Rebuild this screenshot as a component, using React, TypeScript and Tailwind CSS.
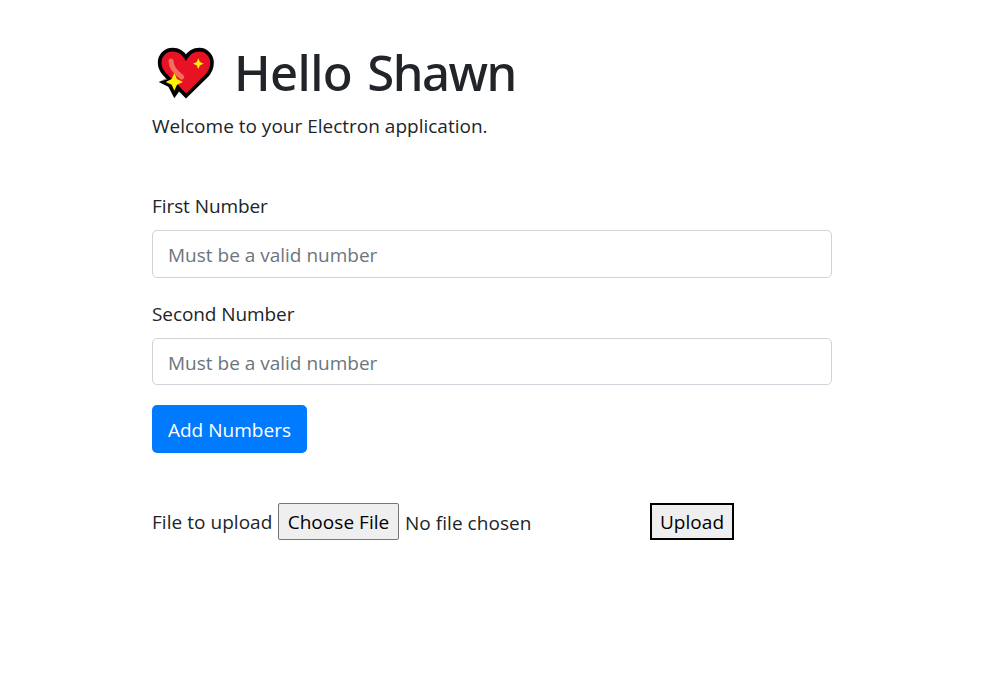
import React from "react";

function SparklingHeart() {
  return (
    <svg width="60" height="54" viewBox="21 21 180 162" className="ml-[5px] shrink-0" aria-hidden="true">
      <path
        d="M68 29C46 29 29 46 29 68c0 14 5 24 14 34l65 66 62-61c11-12 16-24 16-39 0-22-17-39-38-39-17 0-31 9-40 24C99 38 85 29 68 29Z"
        fill="#e81224"
        stroke="#000"
        strokeWidth="11"
        strokeLinejoin="miter"
      />
      <path d="M63 63c0 20 12 33 32 48" fill="none" stroke="#f4705e" strokeWidth="15" strokeLinecap="round" />
      <path d="M26 126L56 112 42 96 30 78 43 106 50 116ZM26 126L55 140 73 175 92 148 108 173 112 166 82 133 60 115Z" fill="#000" />
      <path d="M73 100l8 17 18 9-18 8-8 18-8-18-18-8 18-9Z" fill="#fff100" />
      <path d="M145 55l5 11 11 5-11 5-5 11-5-11-11-5 11-5Z" fill="#fff100" />
    </svg>
  );
}

function NumberField({ label, id, inputClass }: { label: string; id: string; inputClass: string }) {
  return (
    <div>
      <label htmlFor={id} className="mb-[9px] block h-[30px] w-fit leading-[30px] tracking-[-0.08px]">
        {label}
      </label>
      <input
        id={id}
        placeholder="Must be a valid number"
        className={`block w-full rounded-[5px] border border-[#ced4da] px-[15px] pt-[2px] outline-none placeholder:text-[#6c757d] ${inputClass}`}
      />
    </div>
  );
}

export default function App() {
  return (
    <main className="min-h-screen bg-white pt-[42px] font-['Open_Sans','Noto_Sans',sans-serif] text-[19px] text-[#212529]">
      <div className="ml-[152px] w-[680px]">
        <h1 className="flex h-[60px] items-center text-[49px] leading-[60px] font-medium">
          <span className="pt-[4px]">
            <SparklingHeart />
          </span>
          <span className="ml-[17px] font-['Noto_Sans',sans-serif] tracking-[-0.6px] [word-spacing:3px] whitespace-nowrap">
            Hello <span className="tracking-[-1.5px]">Shawn</span>
          </span>
        </h1>
        <p className="mt-[9px] h-[30px] w-fit leading-[30px]">Welcome to your Electron application.</p>
        <form className="mt-[50px] flex flex-col gap-[21px]" onSubmit={(e) => e.preventDefault()}>
          <NumberField id="first" label="First Number" inputClass="h-[48px]" />
          <NumberField id="second" label="Second Number" inputClass="h-[47px]" />
          <button className="-mt-px h-[48px] w-[155px] rounded-[5px] bg-[#007bff] pt-[2px] tracking-[0.03px] text-white">Add Numbers</button>
        </form>
        <div className="mt-[50px] flex h-[37px] items-center tracking-[0.04px] whitespace-nowrap">
          <span className="w-[126px] pt-[2px]">File to upload</span>
          <button className="h-[37px] w-[121px] rounded-[2px] border border-[#767676] bg-[#efefef] pt-[2px] text-black">Choose File</button>
          <span className="ml-[6px] w-[245px] pt-[4px]">No file chosen</span>
          <button className="h-[37px] w-[84px] border-2 border-black bg-[#efefef] pt-[2px] text-black">Upload</button>
        </div>
      </div>
    </main>
  );
}
